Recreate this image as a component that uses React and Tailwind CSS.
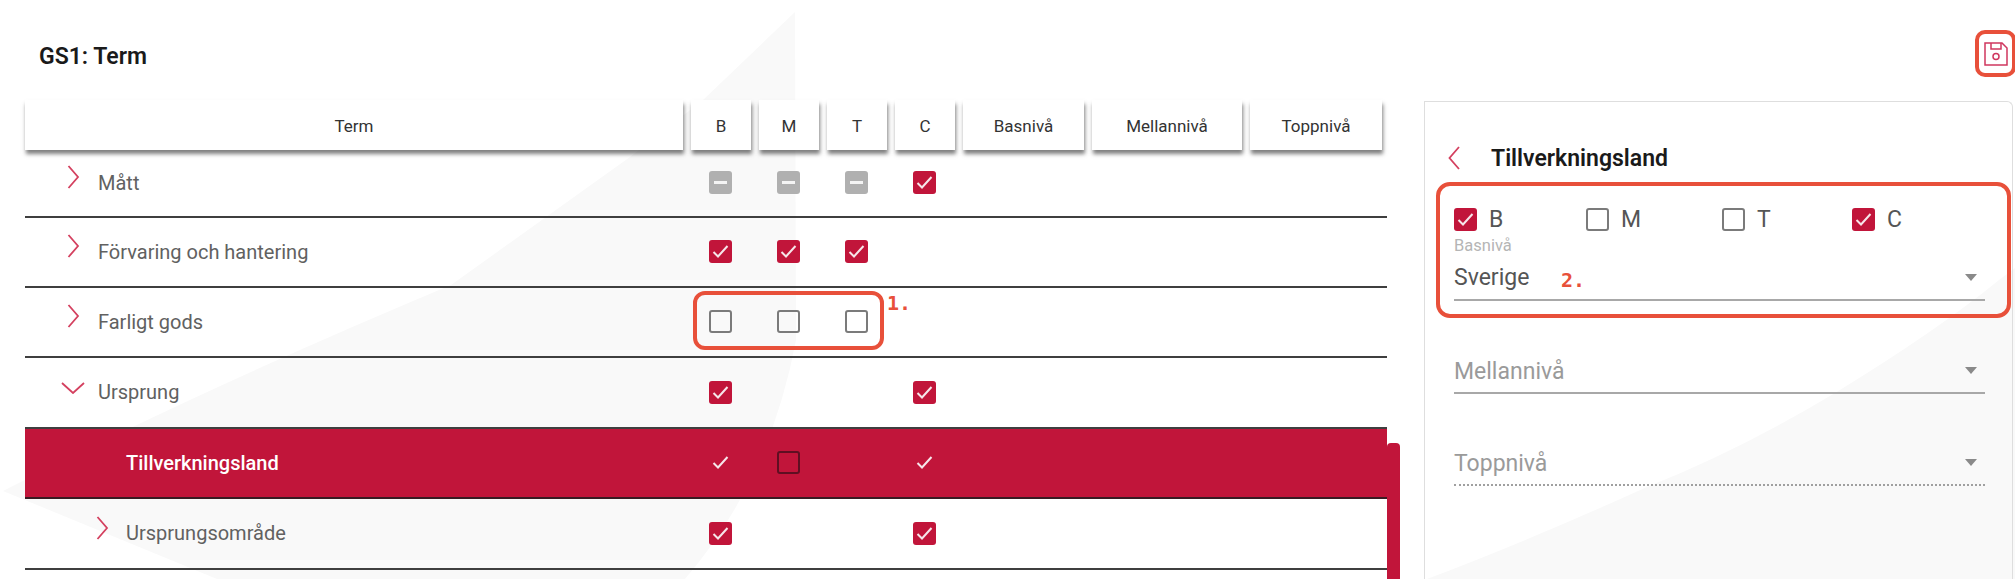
const Chevron = ({ dir = 'right', className = '' }) => {
  const paths = {
    right: 'M1.5 1 L11 12 L1.5 23',
    left: 'M11 1 L1.5 12 L11 23',
  }
  if (dir === 'down') {
    return (
      <svg width="24" height="12" viewBox="0 0 24 12" fill="none" className={className}>
        <path d="M1 1 L12 11 L23 1" stroke="#d4405f" strokeWidth="1.8" />
      </svg>
    )
  }
  return (
    <svg width="13" height="24" viewBox="0 0 13 24" fill="none" className={className}>
      <path d={paths[dir]} stroke="#d4405f" strokeWidth="1.8" />
    </svg>
  )
}

function Check({ className = '' }) {
  return (
    <svg width="23" height="23" viewBox="0 0 23 23" fill="none" className={className}>
      <path d="M4.5 12 L9 16.5 L18.5 6" stroke="#f6e6ea" strokeWidth="2" />
    </svg>
  )
}

function Box({ state }) {
  if (state === 'on') {
    return (
      <div className="w-[23px] h-[23px] rounded-[3px] bg-[#c1153a]">
        <Check />
      </div>
    )
  }
  if (state === 'mixed') {
    return (
      <div className="w-[23px] h-[23px] rounded-[3px] bg-[#b0b0b0] flex items-center justify-center">
        <div className="w-[13px] h-[3px] bg-[#f4f4f4]" />
      </div>
    )
  }
  if (state === 'plain') return <Check />
  if (state === 'dark') {
    return <div className="w-[23px] h-[23px] rounded-[3px] border-[2px] border-[#5f0f22]" />
  }
  if (state === 'off') {
    return <div className="w-[23px] h-[23px] rounded-[3px] border-[2px] border-[#7b7b7b]" />
  }
  return <div className="w-[23px] h-[23px]" />
}

const headers = [
  ['Term', 'w-[658px]'],
  ['B', 'w-[60px]'],
  ['M', 'w-[60px]'],
  ['T', 'w-[60px]'],
  ['C', 'w-[60px]'],
  ['Basnivå', 'w-[121px]'],
  ['Mellannivå', 'w-[150px]'],
  ['Toppnivå', 'w-[132px]'],
]

const rows = [
  { label: 'Mått', chevron: 'right', boxes: ['mixed', 'mixed', 'mixed', 'on'], height: 'h-[67.5px]', chevronTop: 'top-[15px]' },
  { label: 'Förvaring och hantering', chevron: 'right', boxes: ['on', 'on', 'on', ''], height: 'h-[70px]', chevronTop: 'top-[16px]' },
  { label: 'Farligt gods', chevron: 'right', boxes: ['off', 'off', 'off', ''], height: 'h-[70.5px]', chevronTop: 'top-[16px]' },
  { label: 'Ursprung', chevron: 'down', boxes: ['on', '', '', 'on'], height: 'h-[70.5px]' },
  { label: 'Tillverkningsland', active: true, boxes: ['plain', 'dark', '', 'plain'], height: 'h-[70.5px]' },
  { label: 'Ursprungsområde', chevron: 'right', child: true, boxes: ['on', '', '', 'on'], height: 'h-[70.5px]', chevronTop: 'top-[17px]' },
]

function Row({ row }) {
  return (
    <div
      className={`relative flex items-center ${row.height} border-b-2 ${
        row.active ? 'bg-[#c1153a] border-[#3a1a22]' : 'border-[#3f3f3f]'
      }`}
    >
      <div className="w-[661px] h-full relative flex items-center">
        {row.chevron === 'right' && (
          <Chevron className={`absolute ${row.chevronTop} ${row.child ? 'left-[71px]' : 'left-[42px]'}`} />
        )}
        {row.chevron === 'down' && <Chevron dir="down" className="absolute top-[24px] left-[36px]" />}
        <span
          className={`text-[20px] ${row.active ? 'font-medium text-white ml-[101px]' : 'text-[#616161]'} ${
            row.child ? 'ml-[101px]' : ''
          } ${!row.active && !row.child ? 'ml-[73px]' : ''}`}
        >
          {row.label}
        </span>
      </div>
      {row.boxes.map((b, i) => (
        <div key={i} className="w-[68px] flex justify-center">
          <Box state={b} />
        </div>
      ))}
    </div>
  )
}

function Field({ label, value, dotted, className = '' }) {
  return (
    <div
      className={`w-[531px] h-[46px] flex items-center justify-between pr-[8px] ${
        dotted ? 'border-b-2 border-dotted border-[#a0a0a0]' : 'border-b-2 border-[#a8a8a8]'
      } ${className}`}
    >
      <span className={`text-[23px] ${value ? 'text-[#555] pt-[2px]' : 'text-[#9a9a9a] pt-[4px]'}`}>{value || label}</span>
      <div className="w-0 h-0 border-x-[6px] border-x-transparent border-t-[7px] border-t-[#8a8a8a]" />
    </div>
  )
}

function PanelCheck({ label, state, width }) {
  return (
    <div className={`flex items-center gap-[12px] ${width}`}>
      <Box state={state} />
      <span className="text-[23px] leading-[23px] text-[#555]">{label}</span>
    </div>
  )
}

export default function App() {
  return (
    <div className="relative w-[2015px] h-[579px] overflow-hidden bg-white font-['Roboto',sans-serif]">
      {/* Watermark shapes behind the page */}
      <svg className="absolute inset-0" width="2015" height="579" viewBox="0 0 2015 579" fill="none">
        <path
          d="M795 12 L703 100 L630 157 L451 285 Q200 390 3 491 L217 579 L685 579 Q770 480 796 340 Z"
          fill="#f9f9f9"
        />
        <path d="M2015 268 L1999 280 Q1938 330 1835 393 Q1740 450 1647 487 Q1530 540 1427 579 L2015 579 Z" fill="#f9f9f9" />
      </svg>

      <div className="relative flex justify-between h-[100px] pl-[39px]">
        <h1 className="mt-[14px] h-[86px] flex items-center text-[23px] font-semibold text-[#1a1a1a]">GS1: Term</h1>
        <div className="mt-[30px] -mr-[1px] w-[41px] h-[47px] rounded-[10px] border-[4px] border-[#e8503a] flex items-center justify-center">
          <svg width="24" height="24" viewBox="0 0 24 24" fill="none" stroke="#d0375f" strokeWidth="1.5">
            <path d="M1 1 H18 L23 6 V23 H1 Z" />
            <path d="M7 1 V7 H17 V1" />
            <circle cx="12" cy="14.5" r="3" />
          </svg>
        </div>
      </div>

      <div className="relative flex h-[479px]">
        {/* Table */}
        <div className="w-[1387px] pl-[25px] relative">
          <div className="relative flex gap-2 h-[50px]">
            {headers.map(([name, w]) => (
              <div
                key={name}
                className={`${w} h-[50px] pt-[4px] bg-white flex items-center justify-center text-[17px] text-[#333] shadow-[1px_4px_4px_rgba(0,0,0,0.5)]`}
              >
                {name}
              </div>
            ))}
          </div>
          {rows.map(row => (
            <Row key={row.label} row={row} />
          ))}

          {/* Annotation 1 */}
          <div className="absolute left-[693px] top-[191px] w-[191px] h-[59px] rounded-[12px] border-[4px] border-[#e8503a]" />
          <span className="absolute left-[887px] top-[191px] font-['DejaVu_Sans_Mono',monospace] font-bold text-[20px] leading-[24px] text-[#e8503a]">
            1.
          </span>
        </div>

        {/* Scrollbar */}
        <div className="w-[13px] pt-[343px]">
          <div className="h-full rounded-t-[4px] bg-[#c1153a]" />
        </div>

        {/* Detail panel */}
        <div className="ml-[24px] mt-[1px] w-[589px] border-l border-t border-r border-[#dedede] rounded-tr-[6px] pl-[23px] relative">
          <div className="mt-[42px] h-[30px] flex items-center">
            <Chevron dir="left" className="-mt-[3px]" />
            <span className="ml-[30px] text-[23px] font-semibold text-[#1a1a1a]">Tillverkningsland</span>
          </div>
          <div className="pl-[6px]">
            <div className="mt-[34px] flex">
              <PanelCheck label="B" state="on" width="w-[132px]" />
              <PanelCheck label="M" state="off" width="w-[136px]" />
              <PanelCheck label="T" state="off" width="w-[130px]" />
              <PanelCheck label="C" state="on" width="w-[120px]" />
            </div>
            <div className="mt-[6px] h-[18px] text-[16.5px] leading-[18px] text-[#b5b5b5]">Basnivå</div>
            <Field value="Sverige" />
            <Field label="Mellannivå" className="mt-[47px]" />
            <Field label="Toppnivå" dotted className="mt-[46px]" />
          </div>

          {/* Annotation 2 */}
          <div className="absolute left-[11px] top-[80px] w-[575px] h-[136px] rounded-[14px] border-[4px] border-[#e8503a]" />
          <span className="absolute left-[136px] top-[166px] font-['DejaVu_Sans_Mono',monospace] font-bold text-[20px] leading-[24px] text-[#e8503a]">
            2.
          </span>
        </div>
      </div>
    </div>
  )
}
